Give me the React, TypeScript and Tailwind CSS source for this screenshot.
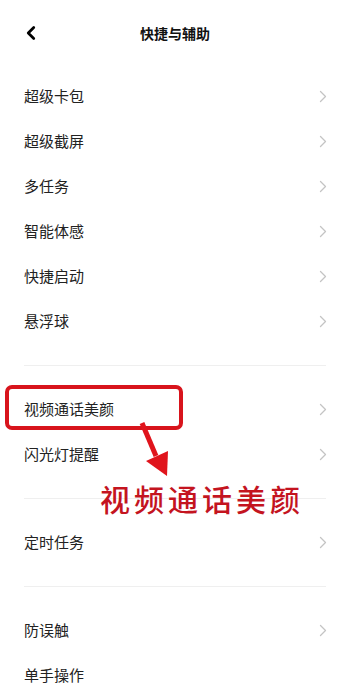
import { ChevronLeft } from "lucide-react";

const FONT = { fontFamily: '"Noto Sans CJK SC", "Noto Sans", sans-serif' };

type Row = { label: string; arrow?: boolean };

const GROUPS: Row[][] = [
  [
    { label: "超级卡包", arrow: true },
    { label: "超级截屏", arrow: true },
    { label: "多任务", arrow: true },
    { label: "智能体感", arrow: true },
    { label: "快捷启动", arrow: true },
    { label: "悬浮球", arrow: true },
  ],
  [
    { label: "视频通话美颜", arrow: true },
    { label: "闪光灯提醒", arrow: true },
  ],
  [{ label: "定时任务", arrow: true }],
  [
    { label: "防误触", arrow: true },
    { label: "单手操作" },
  ],
];

function Chevron() {
  return (
    <svg width="8" height="13" viewBox="0 0 8 13" fill="none" className="shrink-0">
      <path d="M1.5 1.5 L6.5 6.5 L1.5 11.5" stroke="#c4c4c4" strokeWidth="1.3" strokeLinecap="round" strokeLinejoin="round" />
    </svg>
  );
}

function Item({ row }: { row: Row }) {
  return (
    <div className="flex h-[45px] items-center justify-between pl-6 pr-[23px]">
      <span className="text-[15px] text-[#222]">{row.label}</span>
      {row.arrow && <Chevron />}
    </div>
  );
}

export default function App() {
  return (
    <div className="relative h-[700px] w-[350px] overflow-hidden bg-white" style={FONT}>
      {/* Header */}
      <div className="relative flex h-[66px] items-center justify-center">
        <ChevronLeft className="absolute left-[20px] top-[22px] h-[22px] w-[22px] text-black" strokeWidth={3} />
        <span className="text-[14px] font-bold text-[#111]">快捷与辅助</span>
      </div>

      {/* List */}
      <div className="pt-2">
        {GROUPS.map((g, gi) => (
          <div key={gi}>
            {gi > 0 && (
              <div className="px-6 py-[21px]">
                <div className="h-px bg-[#efefef]" />
              </div>
            )}
            {g.map(r => (
              <Item key={r.label} row={r} />
            ))}
          </div>
        ))}
      </div>

      {/* Annotation */}
      <div className="absolute left-[5px] top-[385px] h-[45px] w-[178px] rounded-[7px] border-[4px] border-[#d8141c]" />
      <svg className="absolute left-0 top-0" width="350" height="700" viewBox="0 0 350 700">
        <line x1="142" y1="423" x2="156" y2="456" stroke="#e0141c" strokeWidth="5" />
        <polygon points="146,461 168,451 167,476" fill="#e0141c" />
      </svg>
      <div className="absolute left-[100px] top-[483px] text-[30px] font-medium leading-none tracking-[4px] text-[#c4141f]">
        视频通话美颜
      </div>
    </div>
  );
}
